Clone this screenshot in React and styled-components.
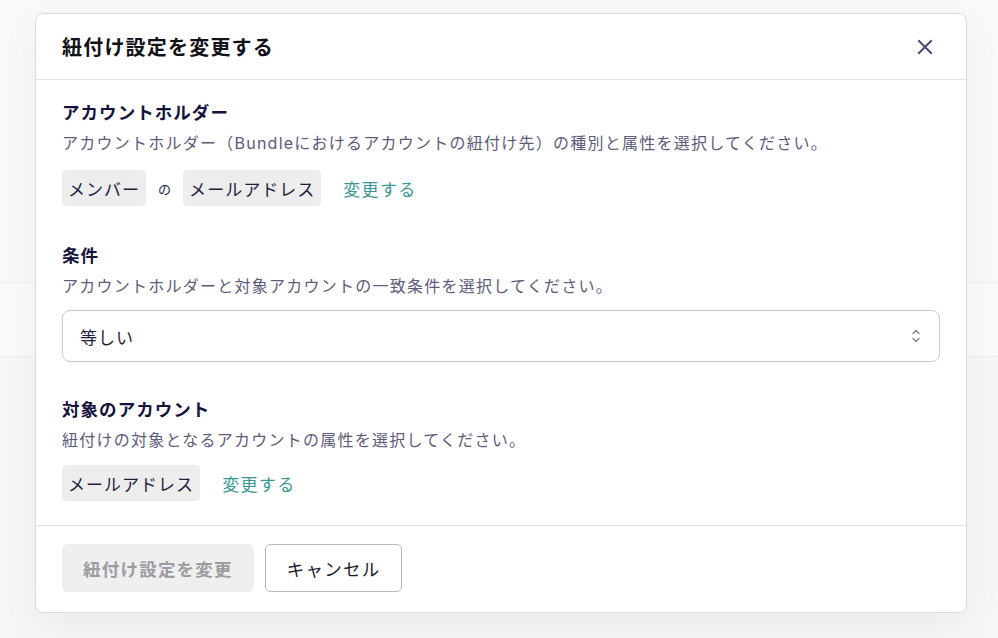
import React from 'react';
import styled, { createGlobalStyle } from 'styled-components';

const GlobalStyle = createGlobalStyle`
    html, body {
        margin: 0;
        padding: 0;
        background: #f8f8f9;
        font-family: Inter, "Noto Sans CJK JP", sans-serif;
        -webkit-font-smoothing: antialiased;
    }
`

function CloseIcon() {
    return (
        <svg width="16" height="16" viewBox="0 0 16 16" fill="none">
            <path d="M2 2L14 14M14 2L2 14" stroke="#4b4a74" strokeWidth="2" strokeLinecap="square" />
        </svg>
    );
}

function UpDownIcon() {
    return (
        <svg width="10" height="16" viewBox="0 0 10 16" fill="none">
            <path d="M2 5.5L5 2.5L8 5.5" stroke="#8a8a96" strokeWidth="1.5" strokeLinecap="round" strokeLinejoin="round" />
            <path d="M2 10.5L5 13.5L8 10.5" stroke="#8a8a96" strokeWidth="1.5" strokeLinecap="round" strokeLinejoin="round" />
        </svg>
    );
}

function App() {
    return (
        <Page>
            <GlobalStyle />
            <Backdrop>
                <BgTop />
                <BgRow />
                <BgRest />
            </Backdrop>
            <Overlay>
                <Modal>
                    <Header>
                        <Title>紐付け設定を変更する</Title>
                        <CloseButton aria-label="閉じる"><CloseIcon /></CloseButton>
                    </Header>
                    <Body>
                        <Section>
                            <Heading>アカウントホルダー</Heading>
                            <Description>アカウントホルダー（Bundleにおけるアカウントの紐付け先）の種別と属性を選択してください。</Description>
                            <ChipRow>
                                <Chip>メンバー</Chip>
                                <Connector>の</Connector>
                                <Chip>メールアドレス</Chip>
                                <ChangeLink>変更する</ChangeLink>
                            </ChipRow>
                        </Section>
                        <Section $top={2}>
                            <Heading>条件</Heading>
                            <Description>アカウントホルダーと対象アカウントの一致条件を選択してください。</Description>
                            <Select>
                                <span>等しい</span>
                                <UpDownIcon />
                            </Select>
                        </Section>
                        <Section>
                            <Heading>対象のアカウント</Heading>
                            <Description>紐付けの対象となるアカウントの属性を選択してください。</Description>
                            <ChipRow $top={12}>
                                <Chip>メールアドレス</Chip>
                                <ChangeLink>変更する</ChangeLink>
                            </ChipRow>
                        </Section>
                    </Body>
                    <Footer>
                        <PrimaryButton disabled>紐付け設定を変更</PrimaryButton>
                        <CancelButton>キャンセル</CancelButton>
                    </Footer>
                </Modal>
            </Overlay>
        </Page>
    );
}

export default App;

const Page = styled.div`
    position: relative;
    width: 100%;
    height: 638px;
    overflow: hidden;
`
const Backdrop = styled.div`
    display: flex;
    flex-direction: column;
    height: 100%;
`
const BgTop = styled.div`
    height: 282px;
    background: #f9f9fa;
    border-bottom: 1px solid #eeeef0;
`
const BgRow = styled.div`
    height: 73px;
    background: #fafafb;
    border-bottom: 1px solid #eeeef0;
`
const BgRest = styled.div`
    flex: 1;
    background: #f6f6f7;
`
const Overlay = styled.div`
    position: absolute;
    inset: 0;
    padding: 13px 0 0 35px;
`
const Modal = styled.div`
    width: 932px;
    box-sizing: border-box;
    background: #fff;
    border: 1px solid #dcdce0;
    border-radius: 8px;
    box-shadow: 0 12px 40px rgba(20, 20, 40, 0.05);
    display: flex;
    flex-direction: column;
`
const Header = styled.div`
    height: 65px;
    padding: 0 26px;
    display: flex;
    align-items: center;
    justify-content: space-between;
    border-bottom: 1px solid #e2e2e6;
`
const Title = styled.h2`
    margin: 0;
    font-size: 20px;
    letter-spacing: 0.06em;
    font-weight: 700;
    color: #111118;
`
const CloseButton = styled.button`
    border: none;
    background: none;
    padding: 0;
    margin-right: 7px;
    display: flex;
    cursor: pointer;
`
const Body = styled.div`
    padding: 20px 26px 24px;
    display: flex;
    flex-direction: column;
    gap: 35px;
    border-bottom: 1px solid #e2e2e6;
`
const Section = styled.div`
    display: flex;
    flex-direction: column;
    padding-top: ${p => p.$top || 0}px;
`
const Heading = styled.h3`
    margin: 0;
    font-size: 17.5px;
    line-height: 26px;
    letter-spacing: 0.06em;
    font-weight: 700;
    color: #15133c;
`
const Description = styled.p`
    margin: 4px 0 0;
    font-size: 16px;
    line-height: 26px;
    letter-spacing: 0.078em;
    color: #5d5b7a;
`
const ChipRow = styled.div`
    margin-top: ${p => p.$top || 14}px;
    display: flex;
    align-items: center;
    gap: 12px;
`
const Chip = styled.span`
    height: 36px;
    padding: 0 6px;
    display: inline-flex;
    align-items: center;
    background: #ededee;
    border-radius: 4px;
    font-size: 17px;
    letter-spacing: 0.06em;
    color: #1f1d40;
`
const Connector = styled.span`
    font-size: 13px;
    color: #1f1d40;
`
const ChangeLink = styled.a`
    margin-left: 10px;
    font-size: 17px;
    letter-spacing: 0.08em;
    color: #3a9595;
    cursor: pointer;
`
const Select = styled.div`
    margin-top: 11px;
    height: 52px;
    box-sizing: border-box;
    padding: 0 18px 0 17px;
    display: flex;
    align-items: center;
    justify-content: space-between;
    border: 1px solid #c9c9ce;
    border-radius: 8px;
    font-size: 17px;
    letter-spacing: 0.06em;
    color: #1f1d40;
`
const Footer = styled.div`
    padding: 18px 26px 20px;
    display: flex;
    gap: 11px;
`
const PrimaryButton = styled.button`
    height: 48px;
    padding: 0 21px;
    border: none;
    border-radius: 6px;
    background: #efefef;
    font-family: inherit;
    font-size: 17.5px;
    font-weight: 700;
    letter-spacing: 0.07em;
    color: #9c9ca2;
`
const CancelButton = styled.button`
    height: 48px;
    padding: 0 21px;
    border: 1px solid #b8b8be;
    border-radius: 5px;
    background: #fff;
    font-family: inherit;
    font-size: 17.5px;
    letter-spacing: 0.07em;
    color: #1a1a30;
    cursor: pointer;
`
